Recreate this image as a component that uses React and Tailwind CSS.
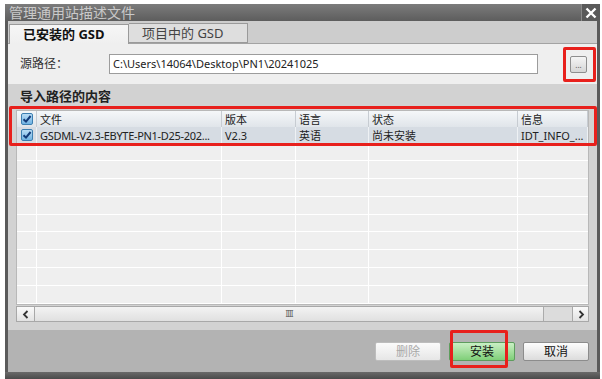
const font = { fontFamily: '"Noto Sans", "Noto Sans CJK SC", sans-serif' }

function Check() {
  return (
    <span className="flex h-[12px] w-[12px] items-center justify-center rounded-[2px] border border-[#3c7fb1] bg-gradient-to-b from-[#b9dcf5] to-[#6fb2e2]">
      <svg width="10" height="10" viewBox="0 0 10 10">
        <path d="M1.5 5.2 L4 7.6 L8.6 2" fill="none" stroke="#123a78" strokeWidth="2" />
      </svg>
    </span>
  )
}

const cols = ['w-[185px]', 'w-[74px]', 'w-[73px]', 'w-[149px]', 'flex-1']

function Row({ cells, className, cellClass }) {
  return (
    <div className={`flex h-[16px] items-center text-[11px] leading-none ${className}`}>
      <div className={`flex h-full w-[20px] items-center justify-center ${cellClass}`}>{cells[0]}</div>
      {cells.slice(1).map((c, i) => (
        <div key={i} className={`flex h-full items-center px-[3px] ${cols[i]} ${cellClass}`}>
          {c}
        </div>
      ))}
    </div>
  )
}

function EmptyRow() {
  return (
    <div className="flex h-[17.9px] border-b border-white">
      <div className="w-[20px] border-r border-white" />
      {cols.map((c, i) => (
        <div key={i} className={`${c} ${i < 4 ? 'border-r border-white' : ''}`} />
      ))}
    </div>
  )
}

function Btn({ children, className }) {
  return (
    <div className={`flex h-[19px] w-[66px] items-center justify-center rounded-[2px] border text-[12px] ${className}`}>
      {children}
    </div>
  )
}

export default function App() {
  return (
    <div className="relative h-[379px] w-[602px] overflow-hidden bg-white pl-[5px] pt-[4px] pr-[2px]" style={font}>
      <div className="flex h-full flex-col border-x-[3px] border-[#5a5a5a] bg-[#efefef]">
        {/* title bar */}
        <div className="-mx-[3px] flex h-[17px] items-center bg-gradient-to-b from-[#7c7c7c] to-[#5d5d5d]">
          <span className="pl-[4px] text-[14px] leading-none text-[#c9c9c9]">管理通用站描述文件</span>
          <div className="ml-auto flex h-full w-[19px] items-center justify-center border-l border-[#8a8a8a] bg-[#5a5a5a]">
            <svg width="12" height="12" viewBox="0 0 12 12">
              <path d="M1.5 1.5 L10.5 10.5 M10.5 1.5 L1.5 10.5" stroke="#fff" strokeWidth="2.4" />
            </svg>
          </div>
        </div>

        {/* tabs */}
        <div className="flex h-[23px] items-end border-b border-[#a3a3a3] bg-[#cdcdcd]">
          <div className="ml-[1px] -mb-px flex h-[20px] w-[120px] items-center border border-b-0 border-[#9a9a9a] bg-gradient-to-b from-[#f6f6f6] to-[#efefef] pl-[13px] text-[13px] font-bold leading-none text-[#111]">
            已安装的 GSD
          </div>
          <div className="flex h-[20px] w-[119px] items-center border border-l-0 border-[#9a9a9a] bg-[#dedede] pl-[13px] text-[13px] leading-none text-[#444]">
            项目中的 GSD
          </div>
        </div>

        {/* source path */}
        <div className="flex h-[40px] items-center">
          <span className="w-[101px] pl-[12px] text-[12px] text-[#333]">源路径：</span>
          <div className="flex h-[20px] w-[429px] items-center border border-[#9c9c9c] bg-white pl-[3px] text-[11px] text-[#222]">
            C:\Users\14064\Desktop\PN1\20241025
          </div>
          <div className="ml-[32px] flex h-[17px] w-[17px] items-end justify-center rounded-[2px] border border-[#8e8e8e] bg-gradient-to-b from-[#f5f5f5] to-[#d6d6d6] pb-[3px] text-[8px] leading-none text-[#555]">
            ...
          </div>
        </div>

        {/* import contents */}
        <div className="flex h-[246px] flex-col bg-[#d2d2d2] px-[8px]">
          <div className="flex h-[26px] items-center pl-[4px] text-[13px] font-bold text-[#222]">导入路径的内容</div>
          <div className="flex flex-col border border-[#b8b8b8] bg-[#efefef]">
            <Row
              className="bg-gradient-to-b from-[#f5f7f9] to-[#e0e5ea] text-[#222]"
              cellClass="border-r border-[#c7ccd2]"
              cells={[<Check key="c" />, '文件', '版本', '语言', '状态', '信息']}
            />
            <Row
              className="bg-[#d6dce3] text-[#222]"
              cellClass="border-r border-[#eef1f4]"
              cells={[
                <Check key="c" />,
                <span key="f" className="tracking-[-0.3px]">GSDML-V2.3-EBYTE-PN1-D25-202...</span>,
                'V2.3',
                '英语',
                '尚未安装',
                'IDT_INFO_...',
              ]}
            />
            {Array.from({ length: 9 }).map((_, i) => (
              <EmptyRow key={i} />
            ))}
          </div>
          {/* scrollbar */}
          <div className="mt-[1px] flex h-[16px] items-stretch border border-[#a8a8a8] bg-[#dcdcdc]">
            <div className="flex w-[18px] items-center justify-center border-r border-[#a8a8a8] bg-gradient-to-b from-[#fafafa] to-[#e2e2e2]">
              <svg width="8" height="9" viewBox="0 0 8 9">
                <path d="M5.5 1 L2 4.5 L5.5 8" fill="none" stroke="#333" strokeWidth="1.8" />
              </svg>
            </div>
            <div className="flex w-[509px] items-center justify-center border-r border-[#ababab] bg-gradient-to-b from-[#f3f3f3] to-[#e0e0e0] text-[8px] leading-none tracking-[-1px] text-[#666]">
              IIII
            </div>
            <div className="flex-1" />
            <div className="flex w-[16px] items-center justify-center border-l border-[#a8a8a8] bg-gradient-to-b from-[#fafafa] to-[#e2e2e2]">
              <svg width="8" height="9" viewBox="0 0 8 9">
                <path d="M2.5 1 L6 4.5 L2.5 8" fill="none" stroke="#333" strokeWidth="1.8" />
              </svg>
            </div>
          </div>
        </div>

        {/* buttons */}
        <div className="flex flex-1 items-start justify-end gap-[8px] bg-[#b3b3b3] pr-[8px] pt-[12px]">
          <Btn className="border-[#bdbdbd] bg-gradient-to-b from-[#fbfbfb] to-[#e6e6e6] text-[#a8a8a8]">删除</Btn>
          <Btn className="border-[#5e9d5e] bg-gradient-to-b from-[#c9efc4] to-[#7fcf78] text-[#111]">安装</Btn>
          <Btn className="border-[#8c8c8c] bg-gradient-to-b from-[#fdfdfd] to-[#dcdcdc] text-[#111]">取消</Btn>
        </div>
        <div className="-mx-[3px] h-[7px] bg-gradient-to-b from-[#6a6a6a] to-[#4a4a4a]" />
      </div>

      {/* red annotation boxes */}
      <div className="absolute left-[563px] top-[47px] h-[35px] w-[33px] rounded-[2px] border-[3px] border-[#e8201c]" />
      <div className="absolute left-[9px] top-[106px] h-[40px] w-[588px] rounded-[2px] border-[3px] border-[#e8201c]" />
      <div className="absolute left-[450px] top-[330px] h-[38px] w-[58px] rounded-[2px] border-[3px] border-[#e8201c]" />
    </div>
  )
}
